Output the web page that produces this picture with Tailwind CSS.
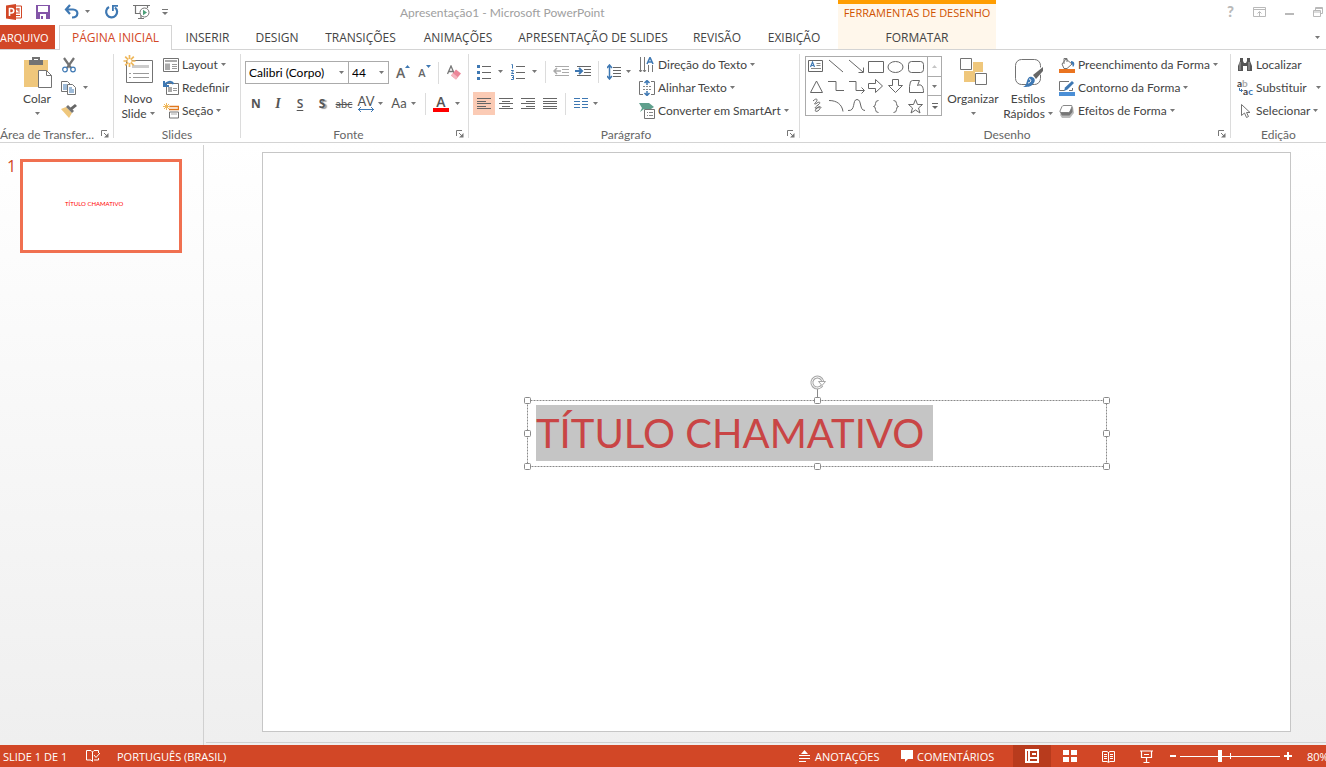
<!DOCTYPE html>
<html lang="pt-BR">
<head>
<meta charset="utf-8">
<title>Apresentação1 - Microsoft PowerPoint</title>
<script src="https://cdn.jsdelivr.net/npm/@tailwindcss/browser@4"></script>
</head>
<body class="flex h-screen flex-col overflow-hidden bg-white font-[Lato,'Open_Sans',sans-serif] text-[12px] leading-[15px] whitespace-nowrap text-[#444]">
<svg class="hidden">
  <symbol id="caret" viewBox="0 0 5 3"><path d="M0 0h5L2.500 3z" fill="#777"/></symbol>
  <symbol id="launch" viewBox="0 0 8 8"><path d="M.5 6V.5H6M3 3l3 3" fill="none" stroke="#777"/><path d="M7.500 3v4.500H3z" fill="#777"/></symbol>
</svg>

<header class="shrink-0">
  <div class="flex h-[25px]">
    <div class="flex w-[838px] shrink-0 items-center">
      <div class="flex w-[175px] items-center pb-[2px] pl-[6px]">
        <svg class="h-4 w-4" viewBox="0 0 16 16"><path d="M8 2h7.500v12H8z" fill="#fff" stroke="#d24726"/><path d="M10 5h4M10 9h4M10 11.500h4" stroke="#d24726"/><path d="M12 4v3h2" stroke="#d24726" fill="none"/><path d="M0 1.500L10 0v16L0 14.500z" fill="#d24726"/><path d="M3.500 12V4.500h2a2 2 0 010 4.500h-2" fill="none" stroke="#fff" stroke-width="1.600"/></svg>
        <button class="ml-[14px]" aria-label="Salvar"><svg class="h-[14px] w-[14px]" viewBox="0 0 14 14"><path d="M0 0h14v14H0z" fill="#8355a8"/><path d="M2 1h10v6H2zM4 9h6v5H4z" fill="#fff"/><path d="M5 11h2v3H5z" fill="#8355a8"/></svg></button>
        <button class="ml-[14px]" aria-label="Desfazer"><svg class="h-4 w-4" viewBox="0 0 16 16"><path d="M6 1L2 5.500 6 10M2 5.500h7c6 0 6 8-1 8" fill="none" stroke="#3e78b3" stroke-width="2.200"/></svg></button>
        <svg class="ml-[5px] h-[3px] w-[5px]"><use href="#caret"/></svg>
        <button class="ml-[14px]" aria-label="Refazer"><svg class="h-4 w-4" viewBox="0 0 16 16"><path d="M5 3a5.500 5.500 0 106 .5" fill="none" stroke="#3e78b3" stroke-width="2.200"/><path d="M8 1h6v1.800H9.800V7H8z" fill="#3e78b3"/></svg></button>
        <button class="ml-[13px]" aria-label="Iniciar apresentação"><svg class="h-4 w-[18px]" viewBox="0 0 18 16"><path d="M0 1.500h17M2.500 2v7.500h6M14.500 2v2M8 10v4M5 14.500h6" fill="none" stroke="#737373" stroke-width="1.200"/><circle cx="11.500" cy="8.500" r="4.500" fill="#fff" stroke="#737373"/><path d="M10 5.800v5.400l4-2.700z" fill="#4c9f78"/></svg></button>
        <svg class="ml-[11px] h-[6px] w-[6px]" viewBox="0 0 6 6"><path d="M0 .5h6" stroke="#777"/><path d="M0 3h6L3 6z" fill="#777"/></svg>
      </div>
      <h1 class="ml-[225px] text-[#a0a0a0]">Apresentação1 - Microsoft PowerPoint</h1>
    </div>
    <div class="w-[158px] shrink-0 border-t-4 border-[#ff9d00] bg-[#fff7eb] pt-px text-center font-['Open_Sans',sans-serif] text-[11px] text-[#cf5300]">FERRAMENTAS DE DESENHO</div>
    <div class="flex min-w-0 flex-1 items-center justify-end gap-[19px] pb-[2px]">
      <button class="text-[15px] font-black text-[#b9b9b9]" aria-label="Ajuda">?</button>
      <button aria-label="Opções da faixa"><svg class="h-[10px] w-[13px]" viewBox="0 0 13 10"><path d="M.5.5h12v9H.500zM.5 2.500h12M6.500 9V5M4.500 6.500l2-2 2 2" fill="none" stroke="#b9b9b9"/></svg></button>
      <button aria-label="Minimizar"><svg class="h-[10px] w-[9px]" viewBox="0 0 9 10"><path d="M0 7h9" stroke="#b9b9b9" stroke-width="2"/></svg></button>
      <button class="mr-[3px]" aria-label="Restaurar"><svg class="h-[10px] w-[10px]" viewBox="0 0 10 10"><path d="M.5 3.500h7v6h-7zM.5 5h7M2.500 3V.5h7v6H8M2.500 1.500h7" fill="none" stroke="#b9b9b9"/></svg></button>
    </div>
  </div>
  <div class="flex h-[25px] border-b border-[#d4d4d4] font-['Open_Sans',sans-serif]">
    <nav class="flex w-[838px] shrink-0">
      <a href="#" class="w-[55px] bg-[#d24726] pt-[5px] text-[11px] text-white">ARQUIVO</a>
      <a href="#" class="relative -mb-px ml-[4px] w-[113px] border border-b-0 border-[#d4d4d4] bg-white pt-[4px] text-center text-[#d24726]">PÁGINA INICIAL</a>
      <a href="#" class="w-[71px] pt-[5px] text-center">INSERIR</a>
      <a href="#" class="w-[68px] pt-[5px] text-center">DESIGN</a>
      <a href="#" class="w-[99px] pt-[5px] text-center">TRANSIÇÕES</a>
      <a href="#" class="w-[96px] pt-[5px] text-center">ANIMAÇÕES</a>
      <a href="#" class="w-[174px] pt-[5px] text-center">APRESENTAÇÃO DE SLIDES</a>
      <a href="#" class="w-[74px] pt-[5px] text-center">REVISÃO</a>
      <a href="#" class="w-[80px] pt-[5px] text-center">EXIBIÇÃO</a>
    </nav>
    <a href="#" class="w-[158px] shrink-0 bg-[#fff7eb] pt-[5px] text-center">FORMATAR</a>
    <div class="flex flex-1 items-center justify-end pr-[6px]"><svg class="h-[3px] w-[5px]"><use href="#caret"/></svg></div>
  </div>
</header>

<section class="flex h-[93px] shrink-0 border-b border-[#d4d4d4]" aria-label="Página inicial">
  <!-- Área de transferência -->
  <div class="flex w-[113px] shrink-0 flex-col">
    <div class="flex flex-1 pt-[3px]">
      <button class="ml-[21px] flex w-[32px] flex-col items-center pt-px">
        <svg class="ml-[2px] h-[34px] w-[28px]" viewBox="0 0 28 34"><path d="M0 6h24v27H0z" fill="#efc77c"/><path d="M5 6h14v5H5z" fill="#737373"/><path d="M9 7V4h6v3" fill="none" stroke="#737373" stroke-width="2"/><path d="M14.500 16.500h8l5 5V33.500h-13z" fill="#fff" stroke="#737373"/><path d="M22.500 16.500v5h5" fill="none" stroke="#737373"/></svg>
        <span class="mt-[3px]">Colar</span>
        <svg class="mt-[6px] h-[3px] w-[5px]"><use href="#caret"/></svg>
      </button>
      <div class="ml-[8px]">
        <button class="flex h-[23px] items-center" aria-label="Recortar"><svg class="h-4 w-4" viewBox="0 0 16 16"><path d="M3 1l7 10M13 1L6 11" stroke="#737373" stroke-width="2.200"/><circle cx="4" cy="12.500" r="2.300" fill="none" stroke="#3e78b3" stroke-width="1.200"/><circle cx="12" cy="12.500" r="2.300" fill="none" stroke="#3e78b3" stroke-width="1.200"/></svg></button>
        <button class="flex h-[23px] items-center" aria-label="Copiar"><svg class="h-4 w-4" viewBox="0 0 16 16"><path d="M.5 1.500h6l3 3v7h-9z" fill="#fff" stroke="#737373"/><path d="M2 5h4M2 7h4M2 9h4" stroke="#3e78b3"/><path d="M6.500 4.500h5l3 3v7h-8z" fill="#fff" stroke="#737373"/><path d="M8 8h3M8 10h5M8 12h5" stroke="#3e78b3"/></svg><svg class="ml-[6px] h-[3px] w-[5px]"><use href="#caret"/></svg></button>
        <button class="flex h-[23px] items-center" aria-label="Pincel de formatação"><svg class="h-4 w-4" viewBox="0 0 16 16"><path d="M0 6l5-2 6 6-3 5z" fill="#efc77c"/><path d="M5 4l2-2 6 6-2 2z" fill="#737373"/><path d="M9 5l5-4 2 2-5 4z" fill="#666"/></svg></button>
      </div>
    </div>
    <div class="flex h-[16px] items-center text-[#666]"><span class="w-[101px]">Área de Transfer...</span><svg class="h-2 w-2"><use href="#launch"/></svg></div>
  </div>
  <div class="mt-[4px] h-[84px] w-px shrink-0 bg-[#dcdcdc]"></div>

  <!-- Slides -->
  <div class="flex w-[126px] shrink-0 flex-col">
    <div class="flex flex-1 pt-[3px]">
      <button class="ml-[6px] flex w-[36px] flex-col items-center pt-px">
        <svg class="h-[34px] w-[30px]" viewBox="0 0 30 34"><path d="M3.500 6.500h26v22h-26z" fill="#fff" stroke="#737373"/><path d="M9 11h17v3H9z" fill="#ccc"/><path d="M6 19.500h2M10 19.500h16M6 23.500h2M10 23.500h16" stroke="#999"/><path d="M6.500 1v12M.5 7h12M2.200 2.700l8.600 8.600M10.800 2.700l-8.600 8.600" stroke="#efb85c" stroke-width="1.700"/><circle cx="6.500" cy="7" r="2" fill="#fff"/></svg>
        <span class="mt-[3px]">Novo</span>
        <span class="flex items-center gap-[3px]">Slide<svg class="h-[3px] w-[5px]"><use href="#caret"/></svg></span>
      </button>
      <div class="ml-[7px]">
        <button class="flex h-[23px] items-center gap-[3px]"><svg class="h-4 w-4" viewBox="0 0 16 16"><path d="M.5 1.500h15v13H.500z" fill="#fff" stroke="#737373"/><path d="M2 3h12v2H2zM2 6.500h5V13H2z" fill="#aaa"/><path d="M9 7.500h5M9 9.500h5M9 11.500h5" stroke="#999"/></svg>Layout<svg class="h-[3px] w-[5px]"><use href="#caret"/></svg></button>
        <button class="flex h-[23px] items-center gap-[3px]"><svg class="h-4 w-4" viewBox="0 0 16 16"><path d="M3.500 3.500h12v11h-12z" fill="#fff" stroke="#737373"/><path d="M5 7h4v5H5z" fill="#aaa"/><path d="M10 8.500h4M10 10.500h4" stroke="#999"/><path d="M1 1v5h5M1.500 5.500c2-4 7-5 9-1.500" fill="none" stroke="#3e78b3" stroke-width="2"/></svg>Redefinir</button>
        <button class="flex h-[23px] items-center gap-[3px]"><svg class="h-4 w-4" viewBox="0 0 16 16"><path d="M6 3.500h9.500v3H6" fill="none" stroke="#e0771e" stroke-width="1.400"/><path d="M6.500 9h9v6h-9z" fill="#fff" stroke="#737373"/><path d="M8 11h6" stroke="#aaa"/><path d="M3.500 0v7M0 3.500h7M1 1l5 5M6 1L1 6" stroke="#efb85c"/></svg>Seção<svg class="h-[3px] w-[5px]"><use href="#caret"/></svg></button>
      </div>
    </div>
    <div class="flex h-[16px] items-center justify-center text-[#666]">Slides</div>
  </div>
  <div class="mt-[4px] h-[84px] w-px shrink-0 bg-[#dcdcdc]"></div>

  <!-- Fonte -->
  <div class="flex w-[227px] shrink-0 flex-col">
    <div class="flex flex-1 flex-col pt-[11px]">
      <div class="flex h-[23px] items-center pl-[4px]">
        <div class="relative"><select aria-label="Fonte" class="block h-[23px] w-[104px] appearance-none border border-[#ababab] bg-white pl-[3px] text-[12px] text-black"><option>Calibri (Corpo)</option></select><svg class="pointer-events-none absolute top-[10px] right-[5px] h-[3px] w-[5px]"><use href="#caret"/></svg></div>
        <div class="relative -ml-px"><select aria-label="Tamanho" class="block h-[23px] w-[41px] appearance-none border border-[#ababab] bg-white pl-[3px] text-[12px] text-black"><option>44</option></select><svg class="pointer-events-none absolute top-[10px] right-[5px] h-[3px] w-[5px]"><use href="#caret"/></svg></div>
        <button class="ml-[7px] flex items-start font-['Open_Sans',sans-serif] text-[14px] font-semibold text-[#666]" aria-label="Aumentar fonte">A<svg class="h-[3px] w-[5px]" viewBox="0 0 5 3"><path d="M0 3h5L2.500 0z" fill="#3e78b3"/></svg></button>
        <button class="ml-[8px] flex items-start font-['Open_Sans',sans-serif] text-[11px] font-semibold text-[#666]" aria-label="Diminuir fonte">A<svg class="h-[3px] w-[5px]" viewBox="0 0 5 3"><path d="M0 0h5L2.500 3z" fill="#3e78b3"/></svg></button>
        <div class="ml-[7px] h-[22px] w-px bg-[#dcdcdc]"></div>
        <button class="ml-[8px]" aria-label="Limpar formatação"><svg class="h-4 w-[14px]" viewBox="0 0 14 16"><path d="M.5 9L4 1l3 7M2 6.500h4" fill="none" stroke="#777" stroke-width="1.300"/><path d="M9 4.500l5 4-5 6-5-4z" fill="#ec8698"/><path d="M4 10.500l2-2.200 5 4L9 14.500z" fill="#f5b5bf"/></svg></button>
      </div>
      <div class="mt-[8px] flex h-[23px] items-center pl-[4px] text-[#555]">
        <button class="w-[22px] font-['Open_Sans',sans-serif] font-bold">N</button>
        <button class="w-[22px] font-['Liberation_Serif',serif] text-[14px] font-bold italic">I</button>
        <button class="w-[22px] font-['Open_Sans',sans-serif] font-semibold underline underline-offset-2">S</button>
        <button class="w-[22px] font-['Open_Sans',sans-serif] font-bold text-shadow-[2px_1px_1px_#999]">S</button>
        <button class="w-[22px] text-[11px] line-through">abc</button>
        <button class="flex w-[22px] flex-col items-center text-[13px] leading-[11px]" aria-label="Espaçamento">AV<svg class="h-[5px] w-[16px]" viewBox="0 0 16 5"><path d="M0 2.500h16M3 0L.5 2.500 3 5M13 0l2.500 2.500L13 5" fill="none" stroke="#3e78b3"/></svg></button>
        <svg class="ml-px h-[3px] w-[5px]"><use href="#caret"/></svg>
        <button class="ml-[7px] w-[18px] text-[13px]">Aa</button>
        <svg class="ml-[3px] h-[3px] w-[5px]"><use href="#caret"/></svg>
        <div class="ml-[9px] h-[22px] w-px bg-[#dcdcdc]"></div>
        <button class="ml-[7px] w-[16px] border-b-4 border-[#f00] font-['Open_Sans',sans-serif] text-[14px] leading-[12px] font-semibold">A</button>
        <svg class="ml-[6px] h-[3px] w-[5px]"><use href="#caret"/></svg>
      </div>
    </div>
    <div class="flex h-[16px] items-center text-[#666]"><span class="flex-1 text-center">Fonte</span><svg class="mr-[4px] h-2 w-2"><use href="#launch"/></svg></div>
  </div>
  <div class="mt-[4px] h-[84px] w-px shrink-0 bg-[#dcdcdc]"></div>

  <!-- Parágrafo -->
  <div class="flex w-[330px] shrink-0 flex-col">
    <div class="flex flex-1">
      <div class="w-[170px] pt-[10px]">
        <div class="flex h-[23px] items-center pl-[8px]">
          <button aria-label="Marcadores"><svg class="h-4 w-[14px]" viewBox="0 0 14 16"><path d="M5 2.500h9M5 8.500h9M5 14.500h9" stroke="#666"/><path d="M0 1h3v3H0zM0 7h3v3H0zM0 13h3v3H0z" fill="#3e78b3"/></svg></button>
          <svg class="ml-[7px] h-[3px] w-[5px]"><use href="#caret"/></svg>
          <button class="ml-[8px]" aria-label="Numeração"><svg class="h-4 w-[14px]" viewBox="0 0 14 16"><path d="M5 2.500h9M5 8.500h9M5 14.500h9" stroke="#666"/><path d="M.5 .5h1v4M0 6.500h2.500L.5 9.500H3M0 11.500h2.500v4H0M1 13.500h1.500" fill="none" stroke="#3e78b3"/></svg></button>
          <svg class="ml-[7px] h-[3px] w-[5px]"><use href="#caret"/></svg>
          <div class="ml-[8px] h-[22px] w-px bg-[#dcdcdc]"></div>
          <button class="ml-[7px]" aria-label="Diminuir recuo"><svg class="h-[11px] w-4" viewBox="0 0 16 11"><path d="M2 .5h14M9 3.500h7M9 6.500h7M2 9.500h14" stroke="#aaa"/><path d="M8 5H1M4 2L1 5l3 3" fill="none" stroke="#aaa" stroke-width="1.500"/></svg></button>
          <button class="ml-[6px]" aria-label="Aumentar recuo"><svg class="h-[11px] w-4" viewBox="0 0 16 11"><path d="M2 .5h14M9 3.500h7M9 6.500h7M2 9.500h14" stroke="#666"/><path d="M0 5h7M4 2l3 3-3 3" fill="none" stroke="#3e78b3" stroke-width="2"/></svg></button>
          <div class="ml-[7px] h-[22px] w-px bg-[#dcdcdc]"></div>
          <button class="ml-[8px]" aria-label="Espaçamento entre linhas"><svg class="h-4 w-[14px]" viewBox="0 0 14 16"><path d="M6 3.500h8M6 6.500h8M6 9.500h8M6 12.500h8" stroke="#666"/><path d="M2.500 1v14M0 4l2.500-3L5 4M0 12l2.500 3L5 12" fill="none" stroke="#3e78b3" stroke-width="1.500"/></svg></button>
          <svg class="ml-[5px] h-[3px] w-[5px]"><use href="#caret"/></svg>
        </div>
        <div class="mt-[9px] flex h-[23px] items-center pl-[4px]">
          <button class="flex h-[23px] w-[22px] items-center justify-center bg-[#fbcbb5]" aria-label="Alinhar à esquerda"><svg class="h-[11px] w-[14px]" viewBox="0 0 14 11"><path d="M0 .5h14M0 3.500h9M0 5.500h14M0 8.500h9M0 10.500h14" stroke="#666"/></svg></button>
          <button class="flex w-[22px] justify-center" aria-label="Centralizar"><svg class="h-[11px] w-[14px]" viewBox="0 0 14 11"><path d="M0 .5h14M3 3.500h8M0 5.500h14M3 8.500h8M0 10.500h14" stroke="#666"/></svg></button>
          <button class="flex w-[22px] justify-center" aria-label="Alinhar à direita"><svg class="h-[11px] w-[14px]" viewBox="0 0 14 11"><path d="M0 .5h14M5 3.500h9M0 5.500h14M5 8.500h9M0 10.500h14" stroke="#666"/></svg></button>
          <button class="flex w-[22px] justify-center" aria-label="Justificar"><svg class="h-[11px] w-[14px]" viewBox="0 0 14 11"><path d="M0 .5h14M0 3.500h14M0 5.500h14M0 8.500h14M0 10.500h14" stroke="#666"/></svg></button>
          <div class="ml-[4px] h-[22px] w-px bg-[#dcdcdc]"></div>
          <button class="ml-[8px]" aria-label="Colunas"><svg class="h-[11px] w-[14px]" viewBox="0 0 14 11"><path d="M0 .5h6M8 .5h6M0 3.500h6M8 3.500h6M0 6.500h6M8 6.500h6M0 9.500h6M8 9.500h6" stroke="#3e78b3"/></svg></button>
          <svg class="ml-[5px] h-[3px] w-[5px]"><use href="#caret"/></svg>
        </div>
      </div>
      <div class="pt-[3px]">
        <button class="flex h-[23px] items-center gap-[3px]"><svg class="h-4 w-4" viewBox="0 0 16 16"><path d="M1.500 0v15M5.500 0v15M9.500 8v7M13.500 8v7M0 13l1.500 2L3 13M4 13l1.500 2L7 13" fill="none" stroke="#777"/><path d="M8 7l3-6.500L14 7M9 5h4" fill="none" stroke="#3e78b3" stroke-width="1.600"/></svg>Direção do Texto<svg class="h-[3px] w-[5px]"><use href="#caret"/></svg></button>
        <button class="flex h-[23px] items-center gap-[3px]"><svg class="h-4 w-4" viewBox="0 0 16 16"><path d="M4 1.500H.5v13H4M12 1.500h3.500v13H12" fill="none" stroke="#737373"/><path d="M4 6.500h8M4 9.500h8" stroke="#888" stroke-dasharray="2 1"/><path d="M8 0v5M8 11v5M5.500 3L8 .5 10.500 3M5.500 13L8 15.500l2.500-2.500" fill="none" stroke="#3e78b3" stroke-width="1.500"/></svg>Alinhar Texto<svg class="h-[3px] w-[5px]"><use href="#caret"/></svg></button>
        <button class="flex h-[23px] items-center gap-[3px]"><svg class="h-4 w-4" viewBox="0 0 16 16"><path d="M0 0h10l5 4-3 2H5L1 9l2-4z" fill="#5f9f8c"/><path d="M5.500 6.500h10v9h-10z" fill="#fff" stroke="#737373"/><path d="M8 9.500h6M8 12.500h6" stroke="#888" stroke-dasharray="1 1 4 1"/></svg>Converter em SmartArt<svg class="h-[3px] w-[5px]"><use href="#caret"/></svg></button>
      </div>
    </div>
    <div class="flex h-[16px] items-center text-[#666]"><span class="flex-1 pr-[4px] text-center">Parágrafo</span><svg class="mr-[4px] h-2 w-2"><use href="#launch"/></svg></div>
  </div>
  <div class="mt-[4px] h-[84px] w-px shrink-0 bg-[#dcdcdc]"></div>

  <!-- Desenho -->
  <div class="flex w-[430px] shrink-0 flex-col">
    <div class="flex flex-1">
      <div class="mt-[6px] ml-[5px] flex h-[60px] w-[137px] border border-[#ababab]">
        <svg class="h-[58px] w-[121px]" viewBox="0 0 121 58" fill="none" stroke="#666" role="img" aria-label="Formas">
          <path d="M2.500 3.500h14v11h-14z"/><path d="M10.500 6.500h4M10.500 8.500h4M5 11.500h10" stroke="#888"/><path d="M4.500 10L6.500 5l2 5M5 8.500h3" stroke="#3e78b3" stroke-width="1.200"/>
          <path d="M23 3l14 12M43 3l14 12M57.500 10.500v5h-5"/>
          <path d="M62.500 4.500h15v11h-15z"/><ellipse cx="89.500" cy="10" rx="7.500" ry="5.500"/><rect x="102.500" y="4.500" width="15" height="11" rx="3"/>
          <path d="M10.500 24l6 11.500H4.500zM22 24.500h8v9h8M43 24.500h7v9h8M55.500 30.500l3 3-3 3"/>
          <path d="M62.500 26.500h7v-4l7 6.500-7 6.500v-4h-7zM86.500 22.500h6v6h4l-7 7-7-7h4zM104.500 24.500l2-1h7l-2 5c4-2 6 1 6 7h-14v-6z"/>
          <path d="M7 44c4-4 5-1 3 1s-2 3 1 1 4 0 1 2-4 4-1 3 4 0 2 2-5 2-3-1 5-3 5-1"/><path d="M23 43.500c8 0 13 4 14 11M42 53.500c8 1 4-11 9-11s2 11 8 11"/>
          <path d="M72.500 43.500q-3 0-3 3t-2 3q2 0 2 3t3 3M87.500 43.500q3 0 3 3t2 3q-2 0-2 3t-3 3"/>
          <path d="M109.500 42.500l2 5h5l-4 3.500 1.500 5-4.500-3-4.500 3 1.500-5-4-3.500h5z"/>
        </svg>
        <div class="flex w-[14px] flex-col border-l border-[#ababab]">
          <button class="flex flex-1 items-center justify-center" aria-label="Acima"><svg class="h-[3px] w-[5px]" viewBox="0 0 5 3"><path d="M0 3h5L2.500 0z" fill="#c5c5c5"/></svg></button>
          <button class="flex flex-1 items-center justify-center border-y border-[#ababab]" aria-label="Abaixo"><svg class="h-[3px] w-[5px]"><use href="#caret"/></svg></button>
          <button class="flex flex-1 items-center justify-center" aria-label="Mais"><svg class="h-[6px] w-[6px]" viewBox="0 0 6 6"><path d="M0 .5h6" stroke="#666"/><path d="M0 3h6L3 6z" fill="#666"/></svg></button>
        </div>
      </div>
      <button class="ml-[4px] flex w-[54px] flex-col items-center pt-[4px]">
        <svg class="h-[34px] w-[28px]" viewBox="0 0 28 34"><path d="M14 8h10v10H14zM5 17h11v11H5z" fill="#efc77c"/><path d="M1.500 4.500h11v11h-11zM16.500 19.500h11v11h-11z" fill="#fff" stroke="#737373"/></svg>
        <span class="mt-[3px]">Organizar</span>
        <svg class="mt-[6px] h-[3px] w-[5px]"><use href="#caret"/></svg>
      </button>
      <button class="flex w-[56px] flex-col items-center pt-[4px]">
        <svg class="h-[34px] w-[30px]" viewBox="0 0 30 34"><rect x="2.500" y="5.500" width="25" height="25" rx="6" fill="#fff" stroke="#737373"/><path d="M29 12v7l-8 9-5-4z" fill="#fff"/><path d="M30 13l-10 8 3 4L30 17z" fill="#666"/><path d="M19 23c3 1 4 4 1 7-2 3-6 3-10 3 3-1 3-3 4-6s2-5 5-4z" fill="#3e78b3"/><path d="M16 25c3 0 2 4-1 4" fill="none" stroke="#fff"/></svg>
        <span class="mt-[3px]">Estilos</span>
        <span class="flex items-center gap-[3px]">Rápidos<svg class="h-[3px] w-[5px]"><use href="#caret"/></svg></span>
      </button>
      <div class="ml-[3px] pt-[3px]">
        <button class="flex h-[23px] items-center gap-[3px]"><svg class="h-4 w-4" viewBox="0 0 16 16"><path d="M0 12h16v4H0z" fill="#ea7420"/><path d="M7 2l6 5-5 4.500H5L3 7z" fill="#fff" stroke="#737373"/><path d="M5 7V1.500h3V5" fill="none" stroke="#737373"/><path d="M12 4c4 0 4 4 2 6-1-2 0-3-2-4z" fill="#3e78b3"/></svg>Preenchimento da Forma<svg class="h-[3px] w-[5px]"><use href="#caret"/></svg></button>
        <button class="flex h-[23px] items-center gap-[3px]"><svg class="h-4 w-4" viewBox="0 0 16 16"><path d="M0 12h16v4H0z" fill="#4b8fd6"/><path d="M10 1.500H.500v9h5M13.500 8v2.500H10" fill="none" stroke="#737373"/><path d="M5 11l1-3.500L13 1l2 2-6.500 6.500z" fill="#3e78b3"/></svg>Contorno da Forma<svg class="h-[3px] w-[5px]"><use href="#caret"/></svg></button>
        <button class="flex h-[23px] items-center gap-[3px]"><svg class="h-4 w-4" viewBox="0 0 16 16"><path d="M5 4h9l1 6-4 5H3l-2-3z" fill="#bbb"/><path d="M5 2.500h7q1.500 0 1 1.200L11 8.500q-.5 1-1.500 1H2Q.500 9.500 1 8l2-4.500q.500-1 2-1z" fill="#fff" stroke="#888"/><path d="M1 9.500h9L13.500 4v5L10.500 12.500H3z" fill="#777"/></svg>Efeitos de Forma<svg class="h-[3px] w-[5px]"><use href="#caret"/></svg></button>
      </div>
    </div>
    <div class="flex h-[16px] items-center text-[#666]"><span class="flex-1 pr-[4px] text-center">Desenho</span><svg class="mr-[4px] h-2 w-2"><use href="#launch"/></svg></div>
  </div>
  <div class="mt-[4px] h-[84px] w-px shrink-0 bg-[#dcdcdc]"></div>

  <!-- Edição -->
  <div class="flex min-w-0 flex-1 flex-col">
    <div class="flex-1 pt-[3px] pl-[6px]">
      <button class="flex h-[23px] items-center gap-[3px]"><svg class="h-4 w-4" viewBox="0 0 16 16"><path d="M3 1h3v3l1 2h2l1-2V1h3v3l2 5v5h-5V9H6v5H1V9l2-5z" fill="#555"/><path d="M3 5v8M12 5v8" stroke="#aaa"/></svg>Localizar</button>
      <button class="flex h-[23px] w-full items-center gap-[3px] pr-[5px]">
        <span class="flex w-4 flex-col pb-[2px] text-left text-[10px] leading-[8px] font-bold" aria-hidden="true"><span>a<span class="text-[#aaa]">b</span></span><span class="flex items-center justify-end"><svg class="h-[5px] w-[4px]" viewBox="0 0 4 5"><path d="M.5 0v2.500h3M2 1l1.500 1.500L2 4" fill="none" stroke="#3e78b3"/></svg>a<span class="text-[#3e78b3]">c</span></span></span>
        Substituir<svg class="ml-auto h-[3px] w-[5px]"><use href="#caret"/></svg></button>
      <button class="flex h-[23px] items-center gap-[3px]"><svg class="h-4 w-4" viewBox="0 0 16 16"><path d="M4.500 1.500v11l3-2.500 2 4.500 2-1-2-4h3.500z" fill="#fff" stroke="#737373"/></svg>Selecionar<svg class="h-[3px] w-[5px]"><use href="#caret"/></svg></button>
    </div>
    <div class="flex h-[16px] items-center justify-center text-[#666]">Edição</div>
  </div>
</section>

<main class="flex min-h-0 flex-1 bg-linear-to-b from-white to-[#efefef]">
  <aside class="mt-[2px] flex w-[204px] shrink-0 border-r border-[#d0d0d0] pt-[14px]">
    <span class="w-[20px] pl-[7px] font-['Open_Sans',sans-serif] text-[16px] text-[#d24726]">1</span>
    <button class="flex h-[94px] w-[162px] items-center border-[3px] border-[#f07050] bg-white pb-[6px] pl-[42px] text-[6px] text-[#f00]">TÍTULO CHAMATIVO</button>
  </aside>
  <div class="flex min-w-0 flex-1 flex-col">
    <div class="relative mt-[9px] mr-[35px] mb-[10px] ml-[58px] flex-1 border border-[#c6c6c6] bg-white">
      <div class="absolute top-[247px] left-[264px] flex h-[67px] w-[580px] pt-[5px] pl-[9px]">
        <svg class="absolute inset-0 h-full w-full overflow-visible" viewBox="0 0 580 67" fill="none" stroke="#8a8a8a">
          <path d="M.5.5h579v66H.500z" stroke-dasharray="2 1"/>
          <path d="M290.500-3v-9"/>
          <g fill="#fff"><rect x="-2.500" y="-2.500" width="6" height="6" rx="1"/><rect x="287.500" y="-2.500" width="6" height="6" rx="1"/><rect x="576.500" y="-2.500" width="6" height="6" rx="1"/><rect x="-2.500" y="30.500" width="6" height="6" rx="1"/><rect x="576.500" y="30.500" width="6" height="6" rx="1"/><rect x="-2.500" y="63.500" width="6" height="6" rx="1"/><rect x="287.500" y="63.500" width="6" height="6" rx="1"/><rect x="576.500" y="63.500" width="6" height="6" rx="1"/></g>
          <path d="M295-14.500a5.500 5.500 0 11.800-4" stroke="#a5a5a5" stroke-width="3"/><path d="M295-14.500a5.500 5.500 0 11.800-4" stroke="#fff"/><path d="M291.500-18.500h7l-3.500 4z" fill="#fff" stroke="#a5a5a5"/>
        </svg>
        <p class="relative h-[56px] w-[397px] bg-[#c5c5c5] text-[40px] leading-[56px] text-[#c94545]">TÍTULO CHAMATIVO</p>
      </div>
    </div>
    <div class="mb-[2px] ml-[2px] h-px bg-[#d0d0d0]"></div>
  </div>
</main>

<footer class="flex h-[22px] shrink-0 items-center bg-[#d24726] font-['Open_Sans',sans-serif] text-[11px] text-white">
  <span class="w-[86px] pl-[3px]">SLIDE 1 DE 1</span>
  <svg class="h-[14px] w-[14px]" viewBox="0 0 14 14"><path d="M6.500 12.500L5 11H.500V1.500H5l1.500 1.500zM6.500 3L8 1.500h4.500V4M8 11h4.500V9M8 6l2 2.500L14 4" fill="none" stroke="#fff"/></svg>
  <span class="ml-[17px]">PORTUGUÊS (BRASIL)</span>
  <div class="ml-auto flex h-full items-center">
    <button class="flex w-[102px] items-center gap-[5px]"><svg class="h-[12px] w-[11px]" viewBox="0 0 11 12"><path d="M2 4h7L5.500 0zM0 5h11v1H0zM0 8h11v1H0zM0 11h7v1H0z" fill="#fff"/></svg>ANOTAÇÕES</button>
    <button class="flex w-[112px] items-center gap-[4px]"><svg class="h-[12px] w-[12px]" viewBox="0 0 12 12"><path d="M0 0h12v9H7l-3 3V9H0z" fill="#fff"/></svg>COMENTÁRIOS</button>
    <button class="flex h-full w-[38px] items-center justify-center bg-[#b83b1d]" aria-label="Normal"><svg class="h-[14px] w-[14px]" viewBox="0 0 14 14"><path d="M0 0h14v14H0z" fill="#fff"/><path d="M2 2h1v10H2zM5 2h7v6H5zM5 10h7v2H5z" fill="#b83b1d"/><path d="M7 4h4v2H7z" fill="#fff"/></svg></button>
    <button class="flex w-[38px] justify-center" aria-label="Classificação"><svg class="h-[14px] w-[14px]" viewBox="0 0 14 14"><path d="M0 1h6v5H0zM8 1h6v5H8zM0 8h6v5H0zM8 8h6v5H8z" fill="#fff"/></svg></button>
    <button class="flex w-[38px] justify-center" aria-label="Leitura"><svg class="h-[13px] w-[13px]" viewBox="0 0 13 13"><path d="M6.500 12.500L5 11.500H.500V1.500H5l1.500 1 1.500-1h4.500v10H8zM6.500 2v10M2 4.500h3M2 6.500h3M2 8.500h3M8 4.500h3M8 6.500h3M8 8.500h3" fill="none" stroke="#fff"/></svg></button>
    <button class="flex w-[38px] justify-center" aria-label="Apresentação"><svg class="h-[13px] w-[13px]" viewBox="0 0 13 13"><path d="M0 1h13M1.500 1v6.500h10V1M4 4.500h5M6.500 8v4M3.500 12.500h6" fill="none" stroke="#fff" stroke-width="1.200"/></svg></button>
    <button class="ml-[5px] h-[2px] w-[6px] bg-white" aria-label="Reduzir"></button>
    <div class="relative ml-[4px] flex h-[12px] w-[100px] items-center">
      <span class="absolute left-[50px] h-[6px] w-px bg-white"></span>
      <input type="range" min="0" max="100" value="40" aria-label="Zoom" class="h-px w-full appearance-none bg-white [&::-webkit-slider-thumb]:h-[12px] [&::-webkit-slider-thumb]:w-[4px] [&::-webkit-slider-thumb]:appearance-none [&::-webkit-slider-thumb]:bg-white">
    </div>
    <button class="ml-[4px]" aria-label="Ampliar"><svg class="h-2 w-2" viewBox="0 0 8 8"><path d="M4 0v8M0 4h8" stroke="#fff" stroke-width="2"/></svg></button>
    <span class="ml-[15px] w-[19px]">80%</span>
  </div>
</footer>
</body>
</html>
